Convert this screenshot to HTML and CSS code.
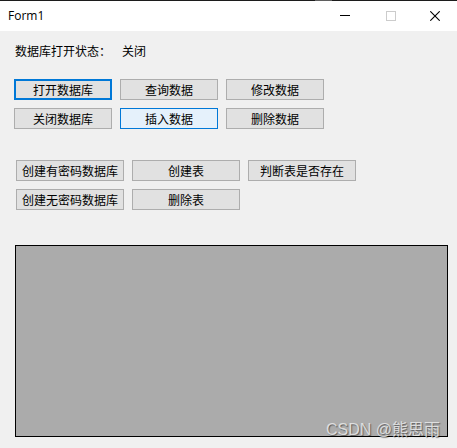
FILE: index.html
```html
<!DOCTYPE html>
<html>
<head>
<meta charset="utf-8">
<link rel="stylesheet" href="styles.css">
</head>
<body>
<div class="window">
  <div class="titlebar">
    <span class="top-accent"></span>
    <span class="title">Form1</span>
    <span class="controls">
      <span class="ctl ctl-min"><svg width="10" height="10" viewBox="0 0 10 10"><line x1="0" y1="5.5" x2="10" y2="5.5" stroke="#000" stroke-width="1"/></svg></span>
      <span class="ctl ctl-max"><svg width="10" height="10" viewBox="0 0 10 10"><rect x="0.5" y="0.5" width="9" height="9" fill="none" stroke="#cccccc" stroke-width="1"/></svg></span>
      <span class="ctl ctl-close"><svg width="10" height="10" viewBox="0 0 10 10"><path d="M0.3 0.3 L9.7 9.7 M9.7 0.3 L0.3 9.7" stroke="#000" stroke-width="1.1"/></svg></span>
    </span>
  </div>
  <div class="client">
    <div class="status">
      <span class="status-label">数据库打开状态：</span>
      <span class="status-value">关闭</span>
    </div>
    <div class="group group-a">
      <div class="row">
        <button class="btn btn-focus">打开数据库</button>
        <button class="btn">查询数据</button>
        <button class="btn">修改数据</button>
      </div>
      <div class="row">
        <button class="btn">关闭数据库</button>
        <button class="btn btn-hover">插入数据</button>
        <button class="btn">删除数据</button>
      </div>
    </div>
    <div class="group group-b">
      <div class="row">
        <button class="btn btn-wide">创建有密码数据库</button>
        <button class="btn btn-wide">创建表</button>
        <button class="btn btn-wide">判断表是否存在</button>
      </div>
      <div class="row">
        <button class="btn btn-wide">创建无密码数据库</button>
        <button class="btn btn-wide">删除表</button>
      </div>
    </div>
    <div class="panel"></div>
  </div>
  <div class="watermark">CSDN @熊思雨</div>
</div>
</body>
</html>
```
FILE: styles.css
```css
html, body {
  margin: 0;
  padding: 0;
  background: #f0f0f0;
}
.window {
  position: relative;
  width: 457px;
  height: 448px;
  background: #f0f0f0;
  font-family: "Noto Sans CJK SC", "Noto Sans", sans-serif;
  font-size: 12px;
  color: #000;
  overflow: hidden;
}
.titlebar {
  position: relative;
  height: 30px;
  border-top: 1px solid #1c1c1c;
  background: #ffffff;
  display: flex;
  align-items: center;
}
.top-accent {
  position: absolute;
  top: -1px;
  left: 315px;
  width: 17px;
  height: 1px;
  background: #5f5f5f;
}
.title {
  margin-left: 8px;
  font-family: "Open Sans", "Noto Sans", sans-serif;
  font-size: 12px;
  color: #000;
  flex: 1;
  line-height: 16px;
}
.controls {
  display: flex;
  height: 30px;
}
.ctl {
  width: 46px;
  height: 30px;
  display: flex;
  align-items: center;
  justify-content: center;
}
.ctl svg { display: block; }
.ctl-min { margin-top: -1px; }
.ctl-max { width: 45px; }
.ctl-close { width: 44px; }
.client {
  padding-top: 12px;
}
.status {
  display: flex;
  height: 16px;
  line-height: 16px;
  margin-left: 15px;
}
.status-label {
  width: 107px;
}
.group {
  display: flex;
  flex-direction: column;
  gap: 8px;
}
.group-a {
  margin-top: 20px;
  margin-left: 14px;
}
.group-b {
  margin-top: 31px;
  margin-left: 16px;
}
.row {
  display: flex;
  gap: 8px;
}
.btn {
  box-sizing: border-box;
  width: 98px;
  height: 21px;
  margin: 0;
  padding: 0;
  border: 1px solid #adadad;
  background: #e1e1e1;
  font-family: "Noto Sans CJK SC", "Noto Sans", sans-serif;
  font-size: 12px;
  line-height: 17px;
  color: #000;
  text-align: center;
  border-radius: 0;
}
.btn-wide {
  width: 108px;
}
.btn-focus {
  border: 2px solid #0078d7;
  line-height: 15px;
}
.btn-hover {
  border-color: #0078d7;
  background: #e5f1fb;
}
.panel {
  box-sizing: border-box;
  margin-top: 35px;
  margin-left: 15px;
  width: 433px;
  height: 192px;
  border: 1px solid #000;
  background: #ababab;
}
.watermark {
  position: absolute;
  right: 17px;
  bottom: 9px;
  font-family: "Liberation Sans", "Noto Sans CJK SC", sans-serif;
  font-size: 16px;
  line-height: 18px;
  color: rgba(235, 235, 235, 0.85);
  text-shadow: 1px 1px 1px rgba(0, 0, 0, 0.45);
}
```
